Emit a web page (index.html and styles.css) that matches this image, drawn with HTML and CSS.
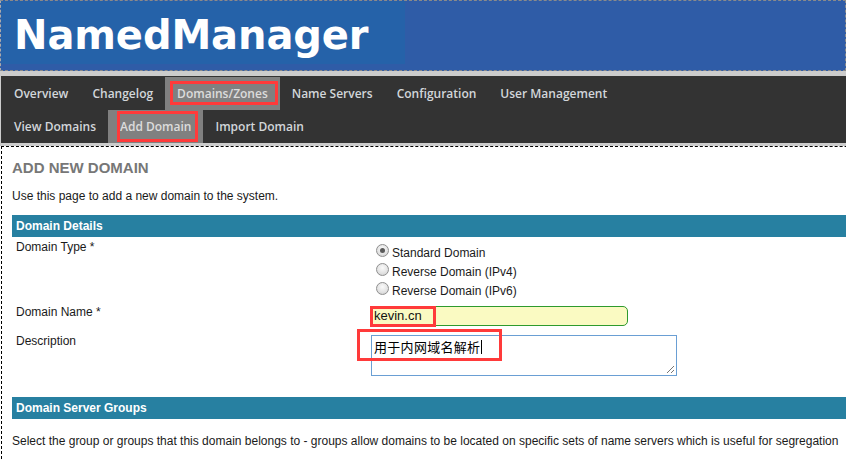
FILE: index.html
```html
<!DOCTYPE html>
<html>
<head>
<meta charset="utf-8">
<title>NamedManager</title>
<link rel="stylesheet" href="styles.css">
</head>
<body>
<div class="header">
  <div class="logo">NamedManager</div>
</div>
<div class="strip-top"></div>
<nav class="nav">
  <div class="nav-row">
    <a class="tab">Overview</a>
    <a class="tab">Changelog</a>
    <a class="tab active mark1">Domains/Zones</a>
    <a class="tab">Name Servers</a>
    <a class="tab">Configuration</a>
    <a class="tab">User Management</a>
  </div>
  <div class="nav-row sub">
    <a class="tab">View Domains</a>
    <a class="tab active mark2">Add Domain</a>
    <a class="tab">Import Domain</a>
  </div>
</nav>
<div class="strip-bottom"></div>
<main class="content">
  <h1 class="title">ADD NEW DOMAIN</h1>
  <p class="intro">Use this page to add a new domain to the system.</p>

  <div class="bar">Domain Details</div>
  <div class="row row-type">
    <div class="label">Domain Type *</div>
    <div class="value radios">
      <div class="radio-line"><span class="radio checked"></span>Standard Domain</div>
      <div class="radio-line"><span class="radio"></span>Reverse Domain (IPv4)</div>
      <div class="radio-line"><span class="radio"></span>Reverse Domain (IPv6)</div>
    </div>
  </div>
  <div class="row row-name">
    <div class="label">Domain Name *</div>
    <div class="value">
      <div class="input">kevin.cn<span class="mark mark-kevin"></span></div>
    </div>
  </div>
  <div class="row row-desc">
    <div class="label">Description</div>
    <div class="value">
      <div class="textarea">用于内网域名解析<span class="caret"></span>
        <svg class="grip" width="9" height="9" viewBox="0 0 9 9"><path d="M8 1 L1 8 M8 5 L5 8" stroke="#777" stroke-width="1"/></svg>
        <span class="mark mark-desc"></span>
      </div>
    </div>
  </div>

  <div class="bar bar2">Domain Server Groups</div>
  <p class="groups">Select the group or groups that this domain belongs to - groups allow domains to be located on specific sets of name servers which is useful for segregation</p>
</main>
</body>
</html>
```

FILE: styles.css
```css
html, body {
  margin: 0;
  padding: 0;
  overflow: hidden;
  background: #fff;
}

body {
  font-family: "Liberation Sans", Arial, sans-serif;
  font-size: 12px;
  color: #1a1a1a;
  width: 846px;
}

.header {
  height: 69px;
  border: 1px dashed #8a8a8a;
  border-left-color: #aaa;
  background: #2f5ca7;
}

.logo {
  width: 391px;
  height: 63px;
  padding-left: 13px;
  background: #2562a9;
  color: #fff;
  font-family: "DejaVu Sans", Verdana, sans-serif;
  font-weight: bold;
  font-size: 40px;
  line-height: 68px;
  letter-spacing: -0.1px;
  overflow: hidden;
}

.strip-top {
  height: 5px;
  background: #cccccc;
}

.nav {
  background: #333333;
  border-left: 1px solid #cccccc;
}

.nav-row {
  display: flex;
  height: 34px;
  padding-left: 1px;
}

.nav-row.sub {
  height: 33px;
}

.tab {
  position: relative;
  display: flex;
  align-items: center;
  padding: 0 12px;
  font-family: "Open Sans", sans-serif;
  font-weight: 600;
  font-size: 12px;
  color: #d2d6da;
  white-space: nowrap;
}

.tab.active {
  background: #808080;
  color: #dcdcdc;
}

.nav-row:first-child .tab.active {
  margin-top: 1px;
}

.mark1::after,
.mark2::after,
.mark {
  content: "";
  position: absolute;
  border: 3px solid #ff3a3a;
  box-sizing: border-box;
  pointer-events: none;
}

.mark1::after {
  left: 5px;
  top: 4px;
  right: 2px;
  height: 24px;
}

.mark2::after {
  left: 9px;
  top: 1px;
  right: 5px;
  height: 31px;
}

.strip-bottom {
  height: 3px;
  background: #cccccc;
}

.content {
  width: 1200px;
  margin-left: 1px;
  border: 1px dashed #000;
  border-right: none;
  padding: 12px 0 20px 10px;
}

.title {
  margin: 0;
  font-size: 15px;
  line-height: 18px;
  font-weight: bold;
  color: #777777;
}

.intro {
  margin: 12px 0 0;
  line-height: 14px;
}

.bar {
  margin-top: 12px;
  height: 22px;
  line-height: 22px;
  padding-left: 4px;
  background: #2780a1;
  color: #fff;
  font-weight: bold;
  font-size: 12px;
}

.row {
  display: flex;
}

.label {
  width: 354px;
  padding-left: 4px;
  line-height: 14px;
  flex: none;
}

.value {
  flex: none;
}

.row-type .label {
  padding-top: 3px;
}

.radios {
  padding-top: 6px;
}

.radio-line {
  display: flex;
  align-items: center;
  height: 19px;
  padding-left: 6px;
}

.radio {
  width: 11px;
  height: 11px;
  border: 1px solid #8f8f8f;
  border-radius: 50%;
  background: radial-gradient(circle at 50% 35%, #fafafa 0%, #e2e2e2 60%, #c8c8c8 100%);
  margin-right: 3px;
  margin-top: -4px;
  position: relative;
  flex: none;
}

.radio.checked::after {
  content: "";
  position: absolute;
  left: 3px;
  top: 3px;
  width: 5px;
  height: 5px;
  border-radius: 50%;
  background: #5a5a5a;
}

.row-name {
  padding-top: 5px;
}

.input {
  position: relative;
  width: 250px;
  height: 18px;
  margin-top: 1px;
  border: 1px solid #2e9a2e;
  border-radius: 5px;
  background: #fafac2;
  padding: 0 3px;
  font-size: 13px;
  line-height: 18px;
  color: #111;
}

.mark-kevin {
  left: -1px;
  top: -1px;
  width: 66px;
  height: 21px;
}

.row-desc {
  padding-top: 8px;
}

.textarea {
  position: relative;
  margin-top: 1px;
  margin-left: 1px;
  width: 300px;
  height: 35px;
  border: 1px solid #6a9fd4;
  padding: 2px;
  font-family: "Noto Sans CJK SC", "Liberation Sans", sans-serif;
  font-size: 13px;
  line-height: 17px;
  letter-spacing: 0.3px;
  color: #000;
}

.caret {
  display: inline-block;
  width: 1px;
  height: 14px;
  background: #000;
  vertical-align: -2px;
  margin-left: 1px;
}

.grip {
  position: absolute;
  right: 1px;
  bottom: 1px;
}

.mark-desc {
  left: -15px;
  top: -7px;
  width: 145px;
  height: 32px;
}

.bar2 {
  margin-top: 21px;
}

.groups {
  margin: 15px 0 0;
  line-height: 14px;
  white-space: nowrap;
}
```
